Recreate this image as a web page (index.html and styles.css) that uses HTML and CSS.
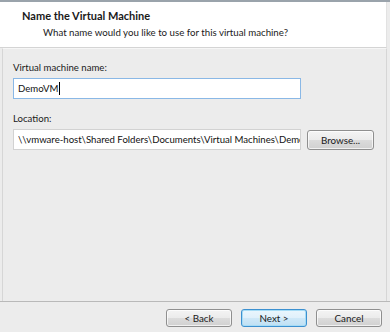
FILE: index.html
```html
<!DOCTYPE html>
<html>
<head>
<meta charset="utf-8">
<link rel="stylesheet" href="styles.css">
</head>
<body>
<div class="dialog">
  <div class="header">
    <div class="title">Name the Virtual Machine</div>
    <div class="subtitle">What name would you like to use for this virtual machine?</div>
  </div>
  <div class="content">
    <div class="field">
      <label class="label">Virtual machine name:</label>
      <div class="input focused"><span>DemoVM</span><span class="caret"></span></div>
    </div>
    <div class="field">
      <label class="label">Location:</label>
      <div class="row">
        <input class="input path" type="text" readonly value="\\vmware-host\Shared Folders\Documents\Virtual Machines\DemoVM">
        <button class="btn browse">Browse...</button>
      </div>
    </div>
  </div>
  <div class="footer">
    <button class="btn">&lt; Back</button>
    <button class="btn default">Next &gt;</button>
    <button class="btn">Cancel</button>
  </div>
</div>
</body>
</html>
```
FILE: styles.css
```css
html, body {
  margin: 0;
  padding: 0;
  background: #ececec;
}
.dialog {
  width: 390px;
  height: 332px;
  box-sizing: border-box;
  border-top: 2px solid #9aa3ab;
  display: flex;
  flex-direction: column;
  font-family: Lato, "Open Sans", sans-serif;
  font-size: 9.6px;
  color: #1a1a1a;
}
.header {
  background: #fff;
  height: 46px;
  box-sizing: border-box;
  padding: 7px 0 0 22px;
  border-bottom: 1px solid #d4d4d4;
  border-right: 1px solid #e2e2e2;
  margin-right: 3px;
}
.title {
  font-weight: bold;
  font-size: 11px;
  line-height: 14px;
}
.subtitle {
  margin-left: 21px;
  line-height: 14px;
  margin-top: 2px;
  font-size: 9.7px;
}
.content {
  flex: 1;
  border-left: 1px solid #d6d6d6;
  border-right: 1px solid #d6d6d6;
  margin: 0 3px 0 2px;
  padding: 12px 0 0 10px;
  display: flex;
  flex-direction: column;
  gap: 13px;
  border-top: 1px solid #f6f6f6;
}
.field {
  display: flex;
  flex-direction: column;
  gap: 3px;
}
.label {
  line-height: 14px;
}
.input {
  width: 288px;
  height: 21px;
  box-sizing: border-box;
  background: #fff;
  border: 1px solid #c9c9c9;
  padding: 0 0 0 4px;
  display: flex;
  align-items: center;
  overflow: hidden;
  white-space: nowrap;
  color: #111;
  margin: 0;
  font-family: Lato, "Open Sans", sans-serif;
  font-size: 9.6px;
}
.input.path {
  outline: none;
  border-radius: 0;
  border-color: #d2d2d2;
}
.input.focused {
  border-color: #8ab8e6;
}
.caret {
  width: 1px;
  height: 13px;
  background: #000;
  margin-left: 1px;
}
.row {
  display: flex;
  align-items: center;
  gap: 6px;
}
.btn {
  font-family: Lato, "Open Sans", sans-serif;
  font-size: 9.8px;
  color: #1a1a1a;
  height: 18px;
  width: 66px;
  padding: 0;
  border: 1px solid #8f8f8f;
  border-radius: 3px;
  background: linear-gradient(#f4f4f4, #ebebeb 50%, #dcdcdc 50%, #d0d0d0);
  box-shadow: inset 0 0 0 1px rgba(255,255,255,0.7);
}
.browse {
  width: 67px;
  height: 20px;
}
.footer {
  height: 31px;
  box-sizing: border-box;
  border-top: 1px solid #b9b9b9;
  display: flex;
  justify-content: flex-end;
  align-items: flex-start;
  padding: 7px 8px 0 0;
  gap: 9px;
}
.btn.default {
  border-color: #3c90d0;
  box-shadow: inset 0 0 0 1px #a6dcf6;
  background: linear-gradient(#eaf6fd, #e0f0fb 50%, #cfe8f8 50%, #bfe0f4);
}
```
